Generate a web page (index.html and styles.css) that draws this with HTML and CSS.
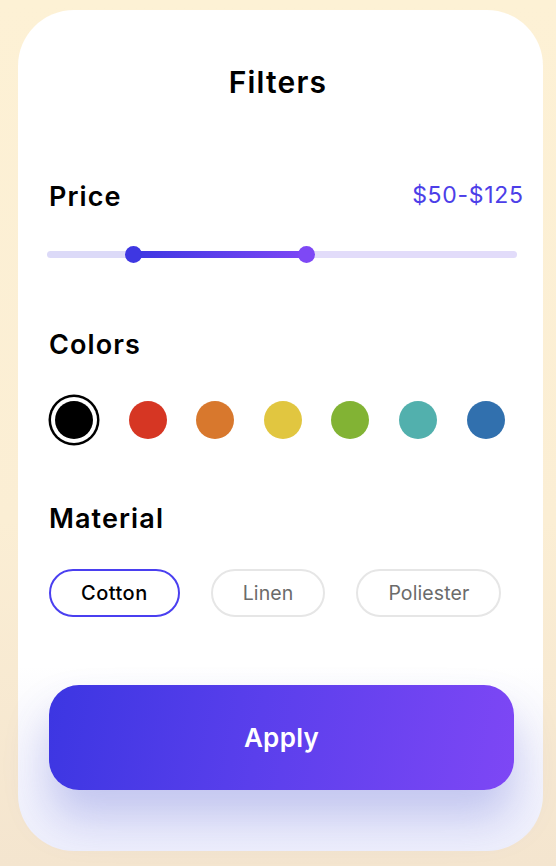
FILE: index.html
```html
<!DOCTYPE html>
<html lang="en">
<head>
<meta charset="utf-8">
<title>Filters</title>
<link rel="stylesheet" href="styles.css">
</head>
<body>
  <main class="card">
    <h1 class="title">Filters</h1>

    <section class="price">
      <div class="row">
        <h2 class="heading">Price</h2>
        <span class="price-value">$50-$125</span>
      </div>
      <div class="slider">
        <div class="seg seg-left" style="width:86.6px"></div>
        <div class="seg seg-active" style="width:173px"></div>
        <div class="seg seg-right"></div>
      </div>
    </section>

    <section class="colors">
      <h2 class="heading">Colors</h2>
      <div class="swatches">
        <span class="swatch selected swatch-black"></span>
        <span class="swatch swatch-red"></span>
        <span class="swatch swatch-orange"></span>
        <span class="swatch swatch-yellow"></span>
        <span class="swatch swatch-green"></span>
        <span class="swatch swatch-teal"></span>
        <span class="swatch swatch-blue"></span>
      </div>
    </section>

    <section class="material">
      <h2 class="heading">Material</h2>
      <div class="chips">
        <button class="chip active">Cotton</button>
        <button class="chip">Linen</button>
        <button class="chip">Poliester</button>
      </div>
    </section>

    <button class="apply">Apply</button>
  </main>
</body>
</html>
```

FILE: styles.css
```css
* { box-sizing: border-box; }

html, body {
  margin: 0;
  padding: 0;
}

body {
  width: 556px;
  height: 866px;
  overflow: hidden;
  background: linear-gradient(180deg, #fdf1d5 0%, #fbeed4 60%, #f4e5cf 100%);
  font-family: Inter, "Noto Sans", sans-serif;
  color: #000;
}

.card {
  margin: 10px 13px 0 18px;
  width: 525px;
  height: 841px;
  border-radius: 56px;
  background: linear-gradient(180deg, #ffffff 0%, #ffffff 78%, #f8f8fd 86%, #eeeffc 100%);
  padding: 52px 29px 0 31px;
  display: flex;
  flex-direction: column;
}

.title {
  margin: 0;
  text-align: center;
  font-size: 30px;
  line-height: 40px;
  font-weight: 600;
  letter-spacing: 1.2px;
  padding-right: 7px;
}

.heading {
  margin: 0;
  font-size: 27px;
  line-height: 34px;
  font-weight: 600;
  letter-spacing: 1.1px;
}

.price {
  margin-top: 78px;
}

.row {
  display: flex;
  justify-content: space-between;
  align-items: center;
  margin-right: -9px;
}

.price-value {
  font-size: 23px;
  line-height: 34px;
  font-weight: 400;
  letter-spacing: 0.7px;
  color: #4c3ee8;
  margin-top: -4px;
  margin-right: -0.7px;
}

.slider {
  margin: 32px -3px 0 -2px;
  height: 17px;
  display: flex;
  align-items: center;
}

.seg {
  height: 7px;
}

.seg-left {
  background: #dcdaf8;
  border-radius: 4px 0 0 4px;
}

.seg-right {
  flex: 1;
  background: #e2dcfa;
  border-radius: 0 4px 4px 0;
}

.seg-active {
  position: relative;
  background: linear-gradient(90deg, #3e37e2 0%, #7d47f5 100%);
}

.seg-active::before,
.seg-active::after {
  content: "";
  position: absolute;
  top: 50%;
  width: 17px;
  height: 17px;
  margin-top: -8.5px;
  border-radius: 50%;
}

.seg-active::before {
  left: -8.5px;
  background: #3e37e2;
}

.seg-active::after {
  right: -8.5px;
  background: #7e48f5;
}

.colors {
  margin-top: 65px;
}

.swatches {
  margin-top: 33px;
  display: flex;
  align-items: center;
  gap: 29.6px;
  height: 50px;
}

.swatch {
  width: 38px;
  height: 38px;
  border-radius: 50%;
  flex: none;
}

.swatch.selected {
  margin-left: 6px;
  margin-right: 6px;
  box-shadow: 0 0 0 4px #fff, 0 0 0 6.5px #000;
}

.swatch-black { background: #000; }
.swatch-red { background: #d63623; }
.swatch-orange { background: #d8782d; }
.swatch-yellow { background: #e1c640; }
.swatch-green { background: #82b334; }
.swatch-teal { background: #52b0ad; }
.swatch-blue { background: #3170ae; }

.material {
  margin-top: 57px;
}

.chips {
  margin-top: 33px;
  display: flex;
  gap: 31px;
}

.chip {
  height: 48px;
  padding: 0 30px;
  border-radius: 24px;
  border: 2px solid #e6e6e6;
  background: #fff;
  font-family: inherit;
  font-size: 19.5px;
  font-weight: 400;
  letter-spacing: 0.1px;
  color: #6b6b6b;
  cursor: pointer;
}

.chip.active {
  border-color: #4a3ff0;
  color: #000;
  font-size: 20px;
  font-weight: 500;
  letter-spacing: 0.5px;
}

.apply {
  margin-top: 68px;
  height: 105px;
  width: 465px;
  border: none;
  border-radius: 30px;
  background: linear-gradient(100deg, #3c36e2 0%, #5a3fec 45%, #7e47f5 100%);
  box-shadow: 0 28px 44px rgba(70, 80, 210, 0.28);
  color: #fff;
  font-family: inherit;
  font-size: 26px;
  font-weight: 600;
  letter-spacing: 0.3px;
  cursor: pointer;
}
```
